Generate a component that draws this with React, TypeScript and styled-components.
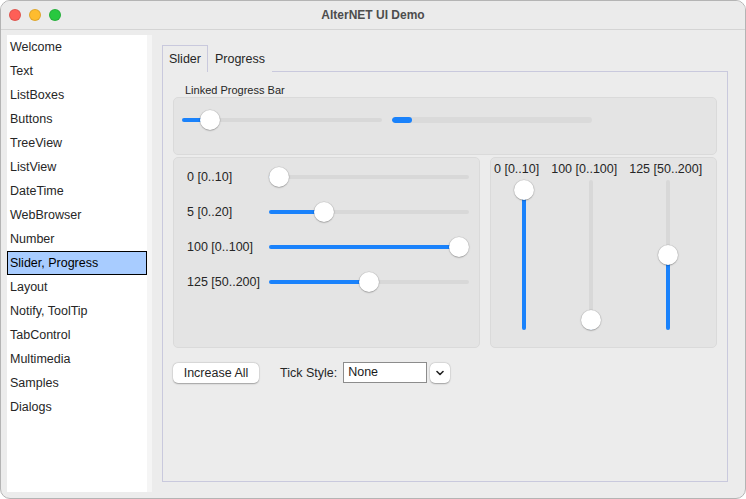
import React from "react";
import styled, { createGlobalStyle } from "styled-components";

const GlobalStyle = createGlobalStyle`
  html, body {
    margin: 0;
    padding: 0;
    background: #ffffff;
  }
  body {
    font-family: "Liberation Sans", Arial, sans-serif;
    font-size: 12.5px;
    color: #262626;
  }
  * {
    box-sizing: border-box;
  }
`;

const BLUE = "#1a82fb";
const TRACK = "#d8d8d8";

const Window = styled.div`
  width: 746px;
  height: 499px;
  display: flex;
  flex-direction: column;
  border: 1px solid #b4b4b4;
  border-radius: 10px;
  overflow: hidden;
  background: #ececec;
`;

const TitleBar = styled.div`
  height: 29px;
  flex: none;
  display: flex;
  align-items: center;
  position: relative;
  border-bottom: 1px solid #d4d4d4;
  background: #ebebeb;
`;

const Lights = styled.div`
  display: flex;
  gap: 8px;
  padding-left: 8px;
`;

const Light = styled.span<{ $c: string }>`
  width: 12px;
  height: 12px;
  border-radius: 50%;
  background: ${(p) => p.$c};
  border: 0.5px solid rgba(0, 0, 0, 0.12);
`;

const Title = styled.div`
  position: absolute;
  left: 0;
  right: 0;
  text-align: center;
  font-weight: bold;
  font-size: 12px;
  color: #4d4d4d;
  pointer-events: none;
`;

const Body = styled.div`
  flex: 1;
  display: flex;
  padding: 5px 6px 6px 6px;
  min-height: 0;
`;

const Sidebar = styled.ul`
  width: 145px;
  margin: 0;
  padding: 0;
  list-style: none;
  background: #ffffff;
  border-right: 5px solid #f5f5f5;
`;

const Item = styled.li<{ $selected?: boolean }>`
  height: 24px;
  line-height: 22px;
  padding-left: 2px;
  border: 1px solid ${(p) => (p.$selected ? "#000" : "transparent")};
  background: ${(p) => (p.$selected ? "#a8ccff" : "transparent")};
  color: ${(p) => (p.$selected ? "#000" : "#262626")};
  white-space: nowrap;
`;

const Main = styled.div`
  flex: 1;
  display: flex;
  flex-direction: column;
  margin: 10px 11px 10px 10px;
`;

const TabStrip = styled.div`
  display: flex;
  align-items: flex-end;
  height: 26px;
  flex: none;
`;

const Tab = styled.div<{ $active?: boolean }>`
  height: 27px;
  line-height: 27px;
  padding: 0 6px;
  margin-bottom: -1px;
  position: relative;
  z-index: 1;
  background: #ececec;
  border: 1px solid ${(p) => (p.$active ? "#c9c9dd" : "transparent")};
  border-bottom: none;
  font-size: 12.5px;
`;

const Panel = styled.div`
  flex: 1;
  border: 1px solid #c9c9dd;
  padding: 12px 10px 0 10px;
  display: flex;
  flex-direction: column;
`;

const GroupLabel = styled.div`
  font-size: 11px;
  height: 13px;
  line-height: 13px;
  padding-left: 12px;
`;

const GroupBox = styled.div`
  background: #e4e4e4;
  border: 1px solid #dadada;
  border-radius: 5px;
`;

const LinkedBox = styled(GroupBox)`
  height: 58px;
  display: flex;
  align-items: center;
  gap: 10px;
  padding: 0 8px 12px 8px;
`;

const Row = styled.div`
  display: flex;
  gap: 10px;
  margin-top: 2px;
`;

const HBox = styled(GroupBox)`
  width: 307px;
  height: 191px;
  padding: 8px 10px 0 13px;
  display: flex;
  flex-direction: column;
  gap: 13px;
`;

const HRow = styled.div`
  display: flex;
  align-items: center;
  height: 22px;
`;

const HLabel = styled.span`
  width: 82px;
  flex: none;
  white-space: nowrap;
`;

const VBox = styled(GroupBox)`
  flex: 1;
  height: 191px;
  padding: 4px 0 0 3px;
  display: flex;
  gap: 12px;
`;

const VCol = styled.div`
  display: flex;
  flex-direction: column;
  align-items: center;
`;

const VLabel = styled.span`
  height: 14px;
  line-height: 14px;
  white-space: nowrap;
`;

const VSpace = styled.div<{ $shift: number }>`
  margin-top: 4px;
  padding-left: ${(p) => p.$shift}px;
`;

/* horizontal slider */
const HTrack = styled.div<{ $w: number }>`
  position: relative;
  width: ${(p) => p.$w}px;
  height: 22px;
  flex: none;
  &::before {
    content: "";
    position: absolute;
    left: 0;
    right: 0;
    top: 9px;
    height: 4px;
    border-radius: 2px;
    background: ${TRACK};
  }
`;

const HFill = styled.div`
  position: absolute;
  left: 0;
  top: 9px;
  height: 4px;
  border-radius: 2px;
  background: ${BLUE};
`;

const Thumb = styled.div`
  position: absolute;
  width: 20px;
  height: 20px;
  border-radius: 50%;
  background: #ffffff;
  box-shadow: 0 0.5px 1.5px rgba(0, 0, 0, 0.35), 0 0 0 0.5px rgba(0, 0, 0, 0.08);
`;

const HThumb = styled(Thumb)`
  top: 1px;
`;

const VTrack = styled.div`
  position: relative;
  width: 20px;
  height: 150px;
  &::before {
    content: "";
    position: absolute;
    top: 0;
    bottom: 0;
    left: 8px;
    width: 4px;
    border-radius: 2px;
    background: ${TRACK};
  }
`;

const VFill = styled.div`
  position: absolute;
  left: 8px;
  bottom: 0;
  width: 4px;
  border-radius: 2px;
  background: ${BLUE};
`;

const VThumb = styled(Thumb)`
  left: 0;
`;

const Progress = styled.div`
  position: relative;
  width: 200px;
  height: 6px;
  border-radius: 3px;
  background: #dadada;
  overflow: hidden;
`;

const ProgressFill = styled.div`
  height: 100%;
  border-radius: 3px;
  background: ${BLUE};
`;

const Controls = styled.div`
  display: flex;
  align-items: center;
  margin-top: 14px;
`;

const Button = styled.button`
  width: 86px;
  height: 20px;
  padding: 0;
  border: none;
  border-radius: 5px;
  background: #ffffff;
  box-shadow: 0 0.5px 1.5px rgba(0, 0, 0, 0.3), 0 0 0 0.5px rgba(0, 0, 0, 0.06);
  font-family: inherit;
  font-size: 12.5px;
  color: #262626;
`;

const FieldLabel = styled.span`
  margin-left: 21px;
  margin-right: 6px;
`;

const Field = styled.div`
  width: 84px;
  height: 21px;
  border: 1px solid #8c8c8c;
  background: #ffffff;
  padding-left: 4px;
  line-height: 19px;
  color: #1a1a1a;
`;

const DropButton = styled(Button)`
  width: 20px;
  margin-left: 3px;
  display: flex;
  align-items: center;
  justify-content: center;
`;

type HProps = { value: number; min: number; max: number; width: number };

const HSlider = ({ value, min, max, width }: HProps) => {
  const pos = 10 + ((value - min) / (max - min)) * (width - 20);
  return (
    <HTrack $w={width}>
      <HFill style={{ width: pos }} />
      <HThumb style={{ left: pos - 10 }} />
    </HTrack>
  );
};

type VProps = { value: number; min: number; max: number };

const VSlider = ({ value, min, max }: VProps) => {
  const pos = 10 + ((value - min) / (max - min)) * 130;
  return (
    <VTrack>
      <VFill style={{ height: 150 - pos }} />
      <VThumb style={{ top: pos - 10 }} />
    </VTrack>
  );
};

const pages = [
  "Welcome",
  "Text",
  "ListBoxes",
  "Buttons",
  "TreeView",
  "ListView",
  "DateTime",
  "WebBrowser",
  "Number",
  "Slider, Progress",
  "Layout",
  "Notify, ToolTip",
  "TabControl",
  "Multimedia",
  "Samples",
  "Dialogs",
];

const hSliders = [
  { label: "0 [0..10]", value: 0, min: 0, max: 10 },
  { label: "5 [0..20]", value: 5, min: 0, max: 20 },
  { label: "100 [0..100]", value: 100, min: 0, max: 100 },
  { label: "125 [50..200]", value: 125, min: 50, max: 200 },
];

const vSliders = [
  { label: "0 [0..10]", value: 0, min: 0, max: 10, shift: 14 },
  { label: "100 [0..100]", value: 100, min: 0, max: 100, shift: 14 },
  { label: "125 [50..200]", value: 125, min: 50, max: 200, shift: 4 },
];

export default function App() {
  return (
    <>
      <GlobalStyle />
      <Window>
        <TitleBar>
          <Lights>
            <Light $c="#fe5f57" />
            <Light $c="#febc2e" />
            <Light $c="#28c840" />
          </Lights>
          <Title>AlterNET UI Demo</Title>
        </TitleBar>
        <Body>
          <Sidebar>
            {pages.map((p) => (
              <Item key={p} $selected={p === "Slider, Progress"}>
                {p}
              </Item>
            ))}
          </Sidebar>
          <Main>
            <TabStrip>
              <Tab $active>Slider</Tab>
              <Tab>Progress</Tab>
            </TabStrip>
            <Panel>
              <GroupLabel>Linked Progress Bar</GroupLabel>
              <LinkedBox>
                <HSlider value={10} min={0} max={100} width={200} />
                <Progress>
                  <ProgressFill style={{ width: "10%" }} />
                </Progress>
              </LinkedBox>
              <Row>
                <HBox>
                  {hSliders.map((s) => (
                    <HRow key={s.label}>
                      <HLabel>{s.label}</HLabel>
                      <HSlider value={s.value} min={s.min} max={s.max} width={200} />
                    </HRow>
                  ))}
                </HBox>
                <VBox>
                  {vSliders.map((s) => (
                    <VCol key={s.label}>
                      <VLabel>{s.label}</VLabel>
                      <VSpace $shift={s.shift}>
                        <VSlider value={s.value} min={s.min} max={s.max} />
                      </VSpace>
                    </VCol>
                  ))}
                </VBox>
              </Row>
              <Controls>
                <Button>Increase All</Button>
                <FieldLabel>Tick Style:</FieldLabel>
                <Field>None</Field>
                <DropButton>
                  <svg width="8" height="6" viewBox="0 0 8 6">
                    <path
                      d="M1 1.5 L4 4.5 L7 1.5"
                      fill="none"
                      stroke="#222"
                      strokeWidth="1.6"
                      strokeLinecap="round"
                      strokeLinejoin="round"
                    />
                  </svg>
                </DropButton>
              </Controls>
            </Panel>
          </Main>
        </Body>
      </Window>
    </>
  );
}
